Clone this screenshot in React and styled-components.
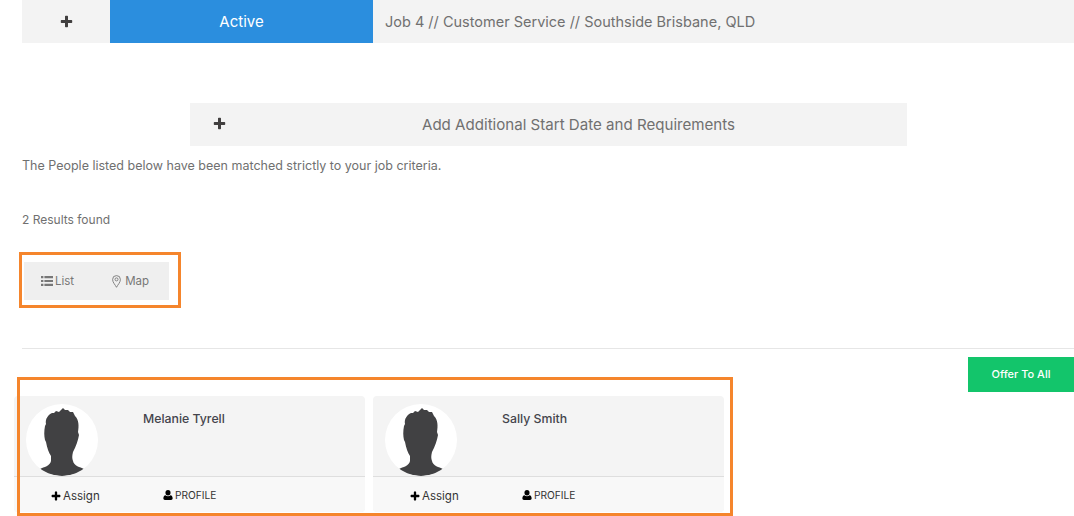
import styled, { createGlobalStyle } from 'styled-components';

const GlobalStyle = createGlobalStyle`
  html, body {
    margin: 0;
    padding: 0;
    background: #fff;
  }
  body {
    font-family: "Inter", "Liberation Sans", sans-serif;
    color: #555;
  }
`;

const people = ['Melanie Tyrell', 'Sally Smith'];

const PlusIcon = ({ size = 13 }) => (
  <svg width={size} height={size} viewBox="0 0 13 13" fill="currentColor">
    <path d="M5 1.5C5 1 5.3.8 5.7.8h1.6c.4 0 .7.2.7.7V5h3.500c.5 0 .7.3.7.7v1.600c0 .4-.2.7-.7.7H8v3.500c0 .5-.3.7-.7.7H5.700c-.4 0-.7-.2-.7-.7V8H1.500C1 8 .8 7.700.8 7.300V5.700C.8 5.300 1 5 1.500 5H5z" />
  </svg>
);

const ListIcon = () => (
  <svg width="12" height="10" viewBox="0 0 12 10" fill="currentColor">
    <path d="M0 0h2.400v2.200H0zM3.400 0H12v2.200H3.400zM0 3.900h2.400v2.200H0zM3.400 3.900H12v2.200H3.400zM0 7.800h2.400V10H0zM3.400 7.800H12V10H3.400z" />
  </svg>
);

const UserIcon = () => (
  <svg width="10" height="10" viewBox="0 0 11 11" fill="currentColor">
    <ellipse cx="5.500" cy="3" rx="2.800" ry="3" />
    <path d="M.4 9.200C.4 7.300 1.300 5.900 2.700 5.700c.7.700 1.700 1.100 2.800 1.100s2.100-.4 2.800-1.100c1.400.2 2.300 1.600 2.300 3.500 0 1.100-.7 1.800-1.700 1.800H2.100C1.100 11 .4 10.300.4 9.200z" />
  </svg>
);

const PinIcon = () => (
  <svg width="9" height="13" viewBox="0 0 9 13" fill="none" stroke="currentColor" strokeWidth="0.9">
    <path d="M4.500 12.300C3.300 9.800.6 7.500.6 4.500a3.900 3.900 0 0 1 7.800 0c0 3-2.700 5.300-3.900 7.800z" />
    <circle cx="4.500" cy="4.400" r="1.500" />
  </svg>
);

const Silhouette = () => (
  <svg width="72" height="72" viewBox="0 0 72 72">
    <path
      fill="#414143"
      d="M14 65 C18 63 24 62 25 57 L25 52 C23 49 21 44 20 38 L19 36 C18 32 18 27 19 22 L20 20 C19 15 22 11 26 9 L28 9 L30 7 L33 8 L35 6 L37 4 L39 6 L42 6 L44 8 L47 8 L49 12 C53 16 53 22 52 28 L53 31 C52 37 50 42 47 48 C46 52 46 54 47 57 C48 62 54 63 58 65 C52 70 44 72 36 72 C28 72 20 70 14 65 Z"
    />
  </svg>
);

const App = () => {
  return (
    <Page>
      <GlobalStyle />
      <TopBar>
        <PlusCell>
          <PlusIcon />
        </PlusCell>
        <StatusCell>Active</StatusCell>
        <JobTitle>Job 4 // Customer Service // Southside Brisbane, QLD</JobTitle>
      </TopBar>

      <AddBar>
        <AddPlus>
          <PlusIcon />
        </AddPlus>
        <AddLabel>Add Additional Start Date and Requirements</AddLabel>
      </AddBar>

      <Intro>The People listed below have been matched strictly to your job criteria.</Intro>
      <ResultCount>2 Results found</ResultCount>

      <ViewToggle>
        <ToggleItem>
          <ListIcon />
          List
        </ToggleItem>
        <ToggleItem $gap={4}>
          <PinIcon />
          Map
        </ToggleItem>
        <Highlight $top={-10} $left={-5} $width={162} $height={56} />
      </ViewToggle>

      <Divider />

      <ActionRow>
        <OfferButton>Offer To All</OfferButton>
      </ActionRow>

      <Results>
        {people.map((name) => (
          <Card key={name}>
            <CardTop>
              <Avatar>
                <Silhouette />
              </Avatar>
              <PersonName>{name}</PersonName>
            </CardTop>
            <CardActions>
              <AssignLink>
                <PlusIcon size={10} />
                Assign
              </AssignLink>
              <ProfileLink>
                <UserIcon />
                PROFILE
              </ProfileLink>
            </CardActions>
          </Card>
        ))}
        <Highlight $top={-19} $left={3} $width={716} $height={139} />
      </Results>
    </Page>
  );
};

export default App;

const Page = styled.div`
  width: 1074px;
  height: 516px;
  overflow: hidden;
  padding-left: 22px;
  box-sizing: border-box;
`;

const TopBar = styled.div`
  display: flex;
  align-items: stretch;
  height: 43px;
  background: #f3f3f3;
`;

const PlusCell = styled.div`
  width: 88px;
  display: flex;
  align-items: center;
  justify-content: center;
  color: #413f3f;
`;

const StatusCell = styled.div`
  width: 263px;
  display: flex;
  align-items: center;
  justify-content: center;
  padding-bottom: 1px;
  box-sizing: border-box;
  background: #2b8ede;
  color: #fff;
  font-size: 15px;
`;

const JobTitle = styled.div`
  display: flex;
  align-items: center;
  padding: 0 0 1px 12px;
  font-size: 14.5px;
  color: #707070;
`;

const AddBar = styled.div`
  position: relative;
  display: flex;
  align-items: center;
  justify-content: center;
  width: 717px;
  height: 43px;
  margin: 60px 0 0 168px;
  padding-bottom: 1px;
  box-sizing: border-box;
  background: #f3f3f3;
`;

const AddPlus = styled.span`
  position: absolute;
  left: 23px;
  top: 14px;
  line-height: 0;
  color: #413f3f;
`;

const AddLabel = styled.span`
  font-size: 15.1px;
  color: #707070;
  margin-left: 60px;
`;

const Intro = styled.p`
  margin: 11px 0 0;
  font-size: 12.5px;
  line-height: 17px;
  color: #707070;
`;

const ResultCount = styled.p`
  margin: 37px 0 0;
  font-size: 12px;
  line-height: 17px;
  color: #707070;
`;

const ViewToggle = styled.div`
  position: relative;
  display: flex;
  align-items: center;
  width: 145px;
  height: 38px;
  margin: 34px 0 0 2px;
  padding-left: 17px;
  box-sizing: border-box;
  gap: 38px;
  background: #efefef;
`;

const ToggleItem = styled.span`
  display: flex;
  align-items: center;
  gap: ${({ $gap = 2 }) => $gap}px;
  font-size: 11.5px;
  color: #777;
`;

const Highlight = styled.div`
  position: absolute;
  top: ${({ $top }) => $top}px;
  left: ${({ $left }) => $left}px;
  width: ${({ $width }) => $width}px;
  height: ${({ $height }) => $height}px;
  box-sizing: border-box;
  border: 3px solid #f5852c;
  pointer-events: none;
`;

const Divider = styled.hr`
  margin: 48px 0 0;
  border: 0;
  border-top: 1px solid #e6e6e6;
`;

const ActionRow = styled.div`
  display: flex;
  justify-content: flex-end;
  height: 35px;
  margin-top: 8px;
`;

const OfferButton = styled.button`
  width: 106px;
  height: 35px;
  padding: 0 0 2px;
  border: 0;
  background: #13c56b;
  color: #fff;
  font: 500 11px "Inter", "Liberation Sans", sans-serif;
`;

const Results = styled.div`
  position: relative;
  display: flex;
  gap: 8px;
  margin: 4px 0 0 -8px;
`;

const Card = styled.div`
  width: 351px;
  height: 116px;
  border-radius: 4px;
  overflow: hidden;
  background: #f4f4f4;
`;

const CardTop = styled.div`
  display: flex;
  height: 81px;
  box-sizing: border-box;
  border-bottom: 1px solid #dedede;
  padding: 8px 0 0 12px;
`;

const Avatar = styled.div`
  width: 72px;
  height: 72px;
  border-radius: 50%;
  overflow: hidden;
  background: #fff;
`;

const PersonName = styled.div`
  margin: 7px 0 0 45px;
  font-size: 12.3px;
  font-weight: 500;
  line-height: 16px;
  color: #44444c;
`;

const CardActions = styled.div`
  display: flex;
  height: 35px;
  background: #f8f8f8;
  color: #333;
  font-size: 11.5px;
`;

const AssignLink = styled.span`
  display: flex;
  align-items: center;
  gap: 2px;
  height: 38px;
  margin-left: 37px;
  width: 112px;
  svg {
    color: #000;
  }
`;

const ProfileLink = styled.span`
  display: flex;
  align-items: center;
  gap: 2px;
  height: 36px;
  font-size: 10.2px;
  svg {
    color: #000;
  }
`;
